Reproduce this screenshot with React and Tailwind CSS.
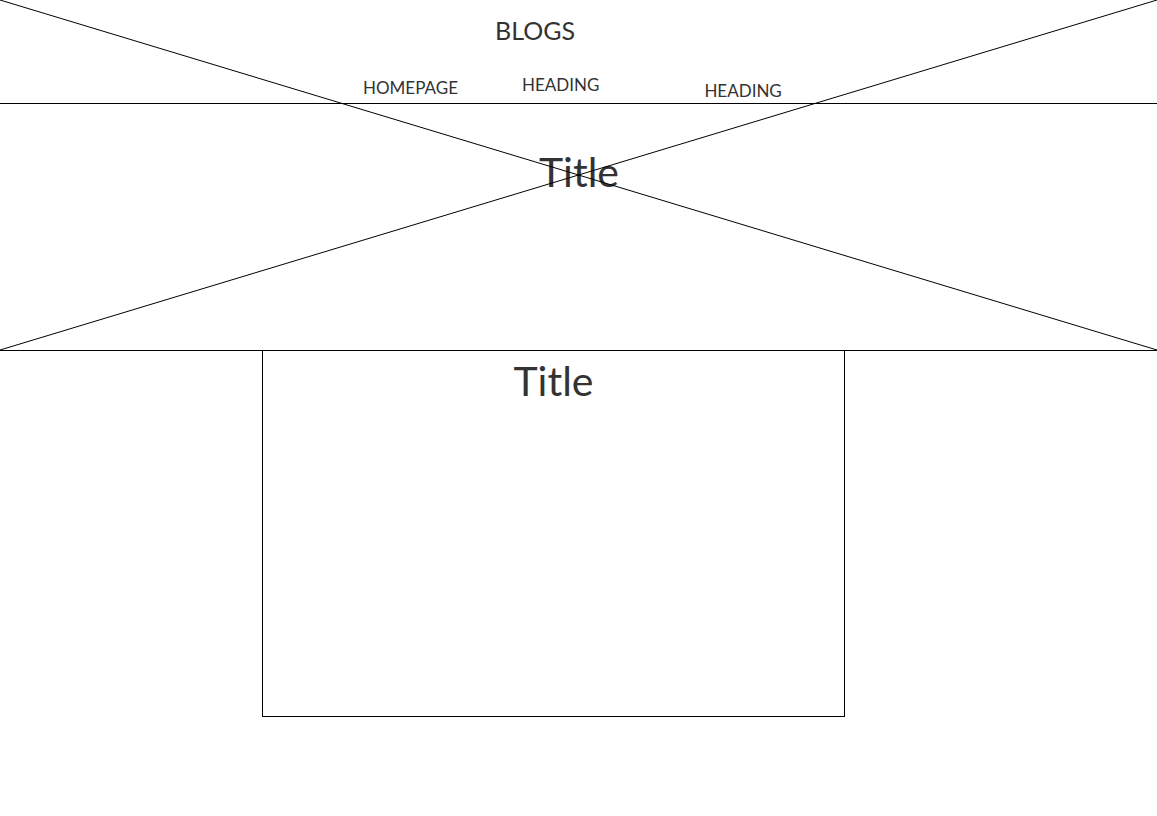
import React from 'react';

const font = { fontFamily: 'Lato, "Liberation Sans", sans-serif' };

export default function App() {
  return (
    <div className="relative w-[1157px] h-[816px] bg-white text-[#333333]" style={font}>
      {/* the big X over header + hero */}
      <svg className="absolute left-0 top-0 pointer-events-none" width="1157" height="351" viewBox="0 0 1157 351">
        <line x1="0" y1="0" x2="1157" y2="350" stroke="#000" strokeWidth="1" />
        <line x1="1157" y1="0" x2="0" y2="350" stroke="#000" strokeWidth="1" />
      </svg>

      {/* header */}
      <header className="h-[104px] border-b border-black flex flex-col">
        <div className="pl-[495px] pt-[15px] text-[25px] leading-[30px]">BLOGS</div>
        <nav className="flex items-start text-[17px] leading-[22px] mt-[27px]">
          <span className="ml-[363px] mt-[5px]">HOMEPAGE</span>
          <span className="ml-[64px] mt-[2px]">HEADING</span>
          <span className="ml-[105px] mt-[8px]">HEADING</span>
        </nav>
      </header>

      {/* hero */}
      <section className="h-[247px] border-b border-black flex justify-center">
        <h1 className="pl-[1px] mt-[44px] text-[41px] leading-[48px]">Title</h1>
      </section>

      {/* card */}
      <div className="ml-[262px] w-[583px] h-[366px] border border-t-0 border-black flex justify-center">
        <h2 className="mt-[6px] text-[41px] leading-[48px]">Title</h2>
      </div>
    </div>
  );
}
